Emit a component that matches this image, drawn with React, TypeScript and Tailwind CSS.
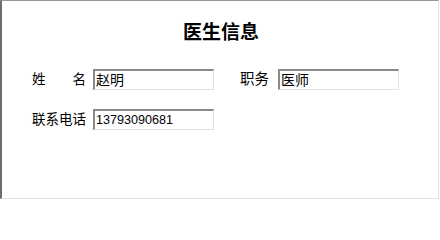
import React from "react";

const cjk = "font-['Liberation_Sans','Noto_Sans_CJK_SC',sans-serif]";

function Field({ value, num }: { value: string; num?: boolean }) {
  return (
    <div className="w-[121px] h-[21px] border-t-2 border-l-2 border-t-[#8a8a8a] border-l-[#8a8a8a] border-r border-b border-r-[#e4e2dc] border-b-[#e4e2dc] bg-white flex items-center pl-[1px]">
      <span
        className={`${cjk} text-black leading-none ${num ? "text-[12.6px]" : "text-[14px]"}`}
      >
        {value}
      </span>
    </div>
  );
}

export default function App() {
  return (
    <div className="w-[440px] h-[200px] bg-white">
      <div className="w-[439px] h-[199px] border-t border-l-2 border-t-[#9a9a94] border-l-[#6e6e66] border-r border-b border-r-[#e2e2e2] border-b-[#e2e2e2] bg-white flex flex-col">
        <div className={`${cjk} text-center font-bold text-[19px] leading-[20px] mt-[22px] text-black pl-[2px]`}>
          医生信息
        </div>
        <div className="flex items-center mt-[26px] pl-[30px]">
          <div className={`${cjk} w-[54px] flex justify-between text-[13.5px] leading-none text-black`}>
            <span>姓</span>
            <span>名</span>
          </div>
          <div className="ml-[7px]">
            <Field value="赵明" />
          </div>
          <div className={`${cjk} ml-[26px] w-[30px] text-[14.5px] leading-none text-black`}>职务</div>
          <div className="ml-[8px]">
            <Field value="医师" />
          </div>
        </div>
        <div className="flex items-center mt-[19px] pl-[30px]">
          <div className={`${cjk} w-[54px] text-[13.5px] leading-none text-black whitespace-nowrap`}>
            联系电话
          </div>
          <div className="ml-[7px]">
            <Field value="13793090681" num />
          </div>
        </div>
      </div>
    </div>
  );
}
